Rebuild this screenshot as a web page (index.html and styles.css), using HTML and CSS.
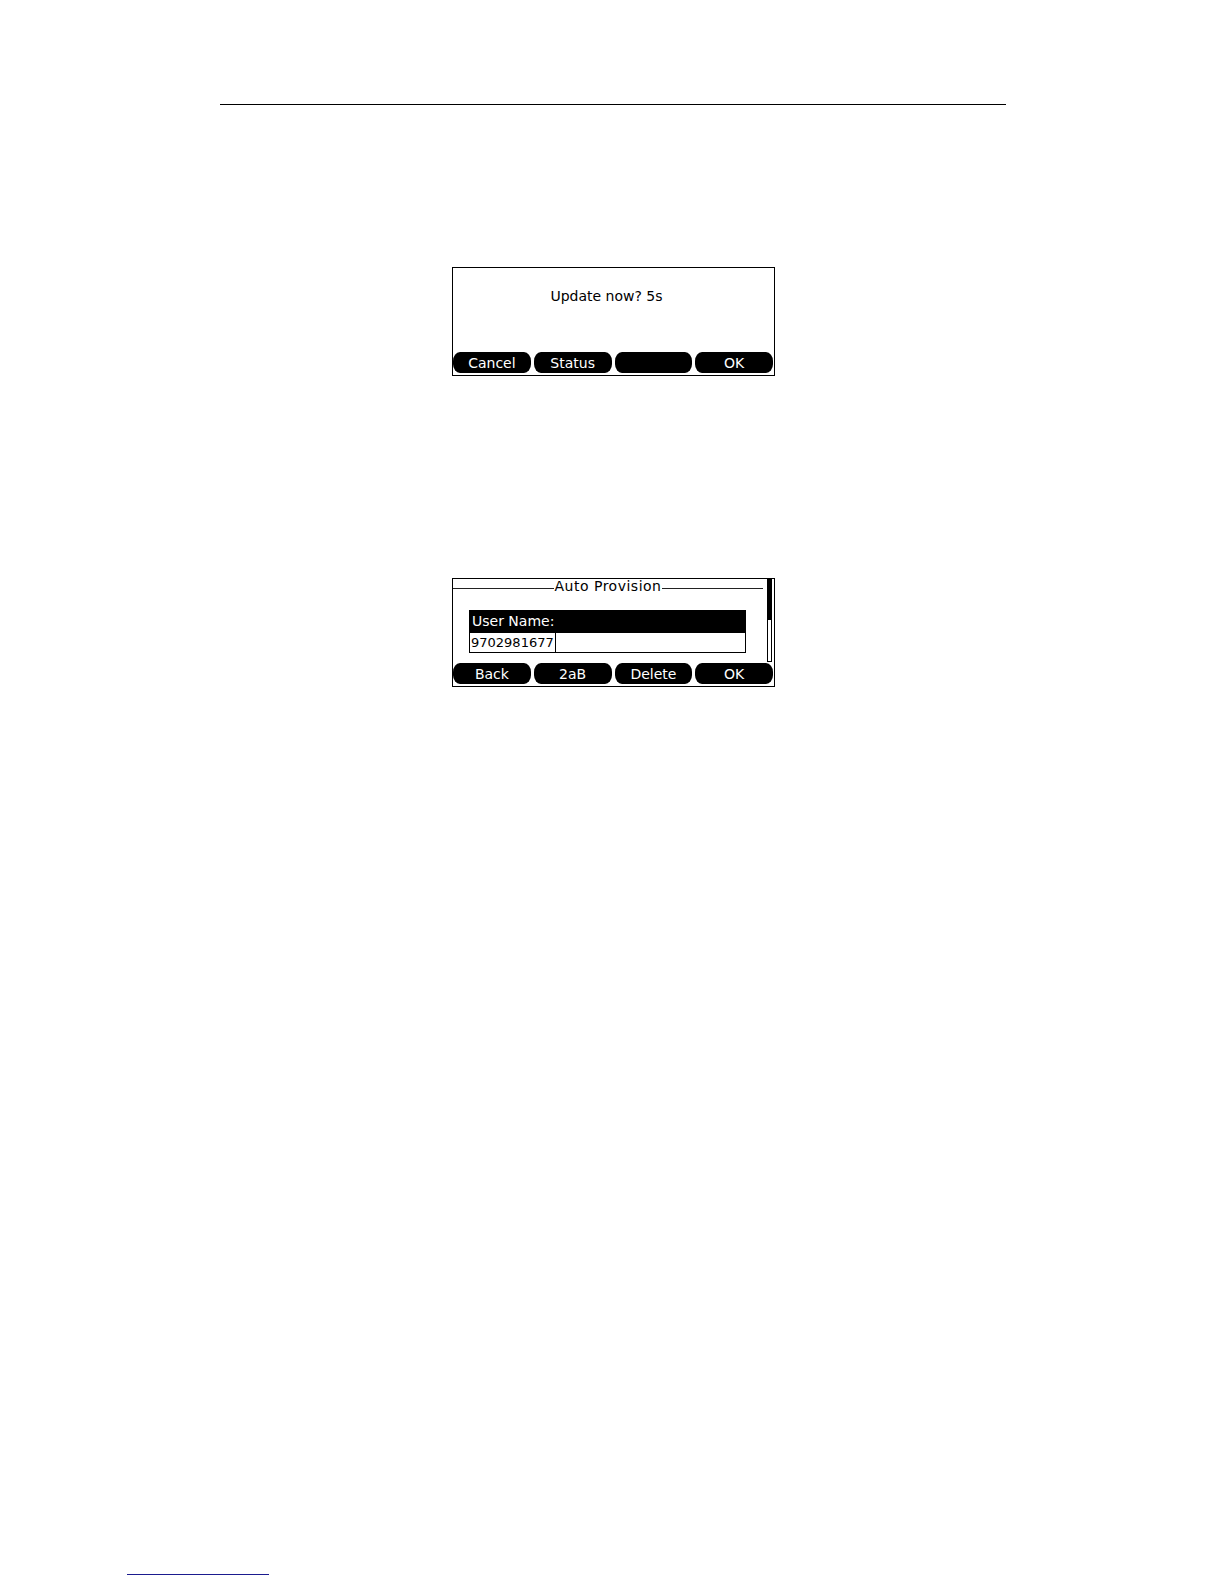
FILE: index.html
```html
<!DOCTYPE html>
<html lang="en">
<head>
<meta charset="utf-8">
<title>Auto Provision</title>
<link rel="stylesheet" href="styles.css">
</head>
<body>
<div class="page">
  <div class="header-rule"></div>

  <div class="screen screen-update">
    <div class="msg">Update now? 5s</div>
    <div class="softkeys">
      <div class="key">Cancel</div>
      <div class="key">Status</div>
      <div class="key"></div>
      <div class="key">OK</div>
    </div>
  </div>

  <div class="screen screen-provision">
    <div class="body">
      <div class="main">
        <div class="title-row">
          <span class="title-line"></span>
          <span class="title">Auto Provision</span>
          <span class="title-line"></span>
        </div>
        <div class="field">
          <div class="field-label">User Name:</div>
          <div class="field-input"><span class="value">9702981677</span></div>
        </div>
      </div>
      <div class="scrollbar"><div class="thumb"></div></div>
    </div>
    <div class="softkeys">
      <div class="key">Back</div>
      <div class="key">2aB</div>
      <div class="key">Delete</div>
      <div class="key">OK</div>
    </div>
  </div>

  <div class="footer-rule"></div>
</div>
</body>
</html>
```

FILE: styles.css
```css
html, body {
  margin: 0;
  padding: 0;
  background: #ffffff;
}

.page {
  width: 1224px;
  height: 1584px;
  padding-top: 104px;
  box-sizing: border-box;
  font-family: "DejaVu Sans", "Liberation Sans", sans-serif;
  color: #000;
}

.header-rule {
  margin-left: 220px;
  width: 786px;
  height: 1px;
  background: #000;
}

.screen {
  margin-left: 452px;
  width: 323px;
  height: 109px;
  box-sizing: border-box;
  border: 1px solid #000;
  display: flex;
  flex-direction: column;
  background: #fff;
}

.screen-update {
  margin-top: 162px;
}

.screen-provision {
  margin-top: 202px;
}

.msg {
  height: 84px;
  padding: 20px 14px 0 0;
  box-sizing: border-box;
  text-align: center;
  font-size: 14px;
  line-height: 16px;
}

.softkeys {
  display: grid;
  grid-template-columns: repeat(4, 1fr);
  column-gap: 3px;
  padding: 0 1px 0 0;
  height: 21px;
}

.key {
  background: #000;
  color: #fff;
  border-radius: 7px / 9px;
  font-size: 14px;
  line-height: 19px;
  padding-top: 2px;
  box-sizing: border-box;
  text-align: center;
}

.body {
  height: 84px;
  display: flex;
}

.main {
  flex: 1;
  display: flex;
  flex-direction: column;
}

.title-row {
  height: 14px;
  display: flex;
  align-items: flex-start;
  gap: 1px;
  padding-right: 4px;
}

.title-line {
  flex: 1;
  height: 1px;
  margin-top: 9px;
  background: #222;
}

.title {
  font-size: 14px;
  line-height: 14px;
  letter-spacing: 0.5px;
}

.field {
  margin-top: 17px;
  margin-left: 16px;
  width: 277px;
}

.field-label {
  height: 22px;
  background: #000;
  color: #fff;
  font-size: 14px;
  line-height: 22px;
  padding-left: 3px;
}

.field-input {
  height: 21px;
  box-sizing: border-box;
  border: 1px solid #000;
  display: flex;
}

.value {
  border-right: 1px solid #000;
  font-size: 13px;
  line-height: 19px;
  padding: 0 1px;
}

.scrollbar {
  width: 5px;
  height: 83px;
  margin: 0 2px 0 0;
  box-sizing: border-box;
  border: 1px solid #000;
  display: flex;
  flex-direction: column;
}

.thumb {
  height: 40px;
  background: #000;
}

.footer-rule {
  margin-top: 887px;
  margin-left: 127px;
  width: 142px;
  height: 1px;
  background: #1b1b8f;
}
```
